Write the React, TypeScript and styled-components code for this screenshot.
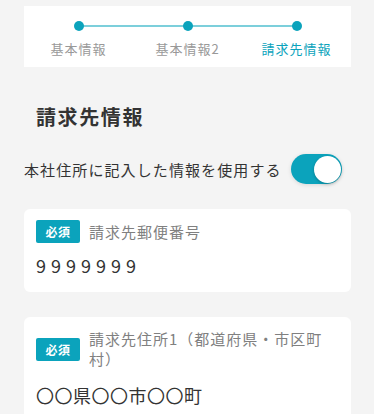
import * as React from 'react';
import styled, { createGlobalStyle } from 'styled-components';

const GlobalStyle = createGlobalStyle`
  body {
    margin: 0;
    background: #f4f4f4;
    font-family: 'Noto Sans CJK JP', 'Noto Sans', sans-serif;
    color: #333;
  }
`;

const Page = styled.div`
  padding: 6px 23px 0 24px;
`;

const Stepper = styled.div`
  background: #fff;
  height: 61px;
  display: grid;
  grid-template-columns: repeat(3, 1fr);
`;

const Step = styled.div`
  display: flex;
  flex-direction: column;
  align-items: center;
  padding-top: 15px;
  position: relative;
`;

const Line = styled.div<{ $side: 'left' | 'right' }>`
  position: absolute;
  top: 19px;
  height: 2px;
  background: #7ccfdb;
  width: 50%;
  ${(p) => (p.$side === 'left' ? 'left: 0;' : 'right: 0;')}
`;

const Dot = styled.div`
  width: 10px;
  height: 10px;
  border-radius: 50%;
  background: #0ba3bc;
  position: relative;
  z-index: 1;
`;

const StepLabel = styled.div<{ $active?: boolean }>`
  margin-top: 8px;
  font-size: 13px;
  line-height: 20px;
  letter-spacing: 1px;
  color: ${(p) => (p.$active ? '#0ba3bc' : '#999')};
`;

const Title = styled.h2`
  margin: 0;
  padding: 36px 0 0 12px;
  font-size: 20px;
  line-height: 28px;
  font-weight: 700;
  letter-spacing: 1.6px;
  color: #333;
`;

const ToggleRow = styled.div`
  display: flex;
  align-items: center;
  justify-content: space-between;
  margin-top: 23px;
  padding-right: 9px;
`;

const ToggleText = styled.span`
  font-size: 15px;
  letter-spacing: 1.1px;
  color: #333;
`;

const Switch = styled.div`
  width: 51px;
  height: 30px;
  border-radius: 15px;
  background: #0ba3bc;
  display: flex;
  align-items: center;
  justify-content: flex-end;
  padding: 0 1px;
  box-sizing: border-box;
  box-shadow: 0 1px 4px rgba(0, 0, 0, 0.12);
`;

const Knob = styled.div`
  width: 27px;
  height: 27px;
  border-radius: 50%;
  background: #fff;
  box-shadow: 0 1px 3px rgba(0, 0, 0, 0.25);
`;

const Card = styled.div<{ $pt: number }>`
  background: #fff;
  border-radius: 6px;
  margin-top: 25px;
  padding: ${(p) => p.$pt}px 12px 15px;
`;

const LabelRow = styled.div`
  display: flex;
  align-items: center;
  gap: 9px;
`;

const Badge = styled.span`
  flex: none;
  width: 44px;
  height: 23px;
  border-radius: 2px;
  background: #0ba3bc;
  color: #fff;
  font-size: 12px;
  font-weight: 700;
  letter-spacing: 0.5px;
  display: flex;
  align-items: center;
  justify-content: center;
`;

const Label = styled.span`
  font-size: 15px;
  line-height: 20px;
  color: #808080;
  letter-spacing: 1px;
`;

const Value = styled.div<{ $spacing: number; $mt: number }>`
  margin-top: ${(p) => p.$mt}px;
  font-size: 18px;
  line-height: 24px;
  color: #333;
  letter-spacing: ${(p) => p.$spacing}px;
`;

const steps = ['基本情報', '基本情報2', '請求先情報'];

export default function App() {
  return (
    <Page>
      <GlobalStyle />
      <Stepper>
        {steps.map((s, i) => (
          <Step key={s}>
            {i > 0 && <Line $side="left" />}
            {i < steps.length - 1 && <Line $side="right" />}
            <Dot />
            <StepLabel $active={i === steps.length - 1}>{s}</StepLabel>
          </Step>
        ))}
      </Stepper>
      <Title>請求先情報</Title>
      <ToggleRow>
        <ToggleText>本社住所に記入した情報を使用する</ToggleText>
        <Switch>
          <Knob />
        </Switch>
      </ToggleRow>
      <Card $pt={11}>
        <LabelRow>
          <Badge>必須</Badge>
          <Label>請求先郵便番号</Label>
        </LabelRow>
        <Value $mt={10} $spacing={5}>9999999</Value>
      </Card>
      <Card $pt={12}>
        <LabelRow>
          <Badge>必須</Badge>
          <Label>請求先住所1（都道府県・市区町村）</Label>
        </LabelRow>
        <Value $mt={14} $spacing={0.5}>〇〇県〇〇市〇〇町</Value>
      </Card>
    </Page>
  );
}
